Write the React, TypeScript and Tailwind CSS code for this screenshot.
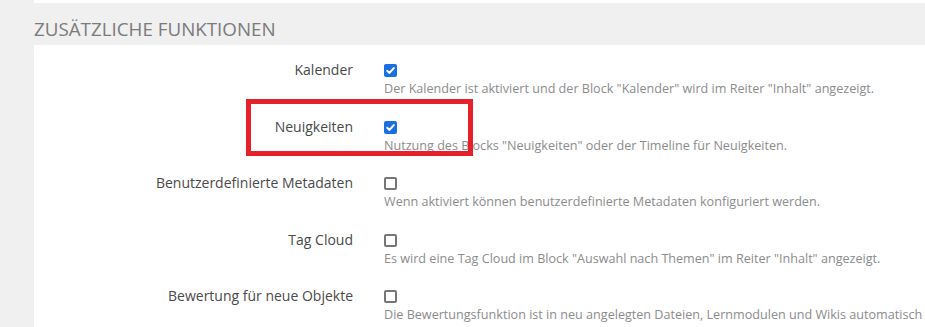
import React from "react";

type Row = { label: string; checked: boolean; desc: string };

const rows: Row[] = [
  { label: "Kalender", checked: true, desc: 'Der Kalender ist aktiviert und der Block "Kalender" wird im Reiter "Inhalt" angezeigt.' },
  { label: "Neuigkeiten", checked: true, desc: 'Nutzung des Blocks "Neuigkeiten" oder der Timeline für Neuigkeiten.' },
  { label: "Benutzerdefinierte Metadaten", checked: false, desc: "Wenn aktiviert können benutzerdefinierte Metadaten konfiguriert werden." },
  { label: "Tag Cloud", checked: false, desc: 'Es wird eine Tag Cloud im Block "Auswahl nach Themen" im Reiter "Inhalt" angezeigt.' },
  { label: "Bewertung für neue Objekte", checked: false, desc: "Die Bewertungsfunktion ist in neu angelegten Dateien, Lernmodulen und Wikis automatisch" },
];

function Checkbox({ checked }: { checked: boolean }) {
  if (checked) {
    return (
      <div className="w-[13px] h-[13px] rounded-[2px] bg-[#1a6fe3] flex items-center justify-center">
        <svg width="11" height="11" viewBox="0 0 10 10">
          <path d="M2 5.2 L4.1 7.2 L8 2.8" fill="none" stroke="#ffffff" strokeWidth="1.8" strokeLinecap="round" strokeLinejoin="round" />
        </svg>
      </div>
    );
  }
  return <div className="w-[13px] h-[13px] rounded-[2px] border-2 border-[#777777] bg-white" />;
}

export default function App() {
  return (
    <div
      className="relative w-[925px] h-[327px] overflow-hidden flex bg-white"
      style={{ fontFamily: '"Open Sans", "Noto Sans", sans-serif' }}
    >
      <div className="w-[34px] shrink-0 bg-[#f0f0f0]" />
      <div className="flex-1 flex flex-col min-w-0">
        <div className="h-[3px] bg-white" />
        <div className="h-[42px] bg-[#f0f0f0] pt-[11.5px]">
          <div className="text-[18.8px] leading-[28px] text-[#7b7b7b] whitespace-nowrap">ZUSÄTZLICHE FUNKTIONEN</div>
        </div>
        <div className="flex flex-col gap-[18.5px] pt-[15px]">
          {rows.map((r) => (
            <div key={r.label} className="flex">
              <div className="w-[319px] shrink-0 text-right text-[14px] leading-[20px] text-[#4a4a4a] whitespace-nowrap">
                {r.label}
              </div>
              <div className="ml-[31px] flex flex-col min-w-0">
                <div className="h-[20px] pt-[4px]">
                  <Checkbox checked={r.checked} />
                </div>
                <div className="text-[12.6px] leading-[18px] text-[#8c8c8c] whitespace-nowrap">{r.desc}</div>
              </div>
            </div>
          ))}
        </div>
      </div>
      <div className="absolute left-[246px] top-[99px] w-[227px] h-[57px] border-[5px] border-[#e5202a]" />
    </div>
  );
}
